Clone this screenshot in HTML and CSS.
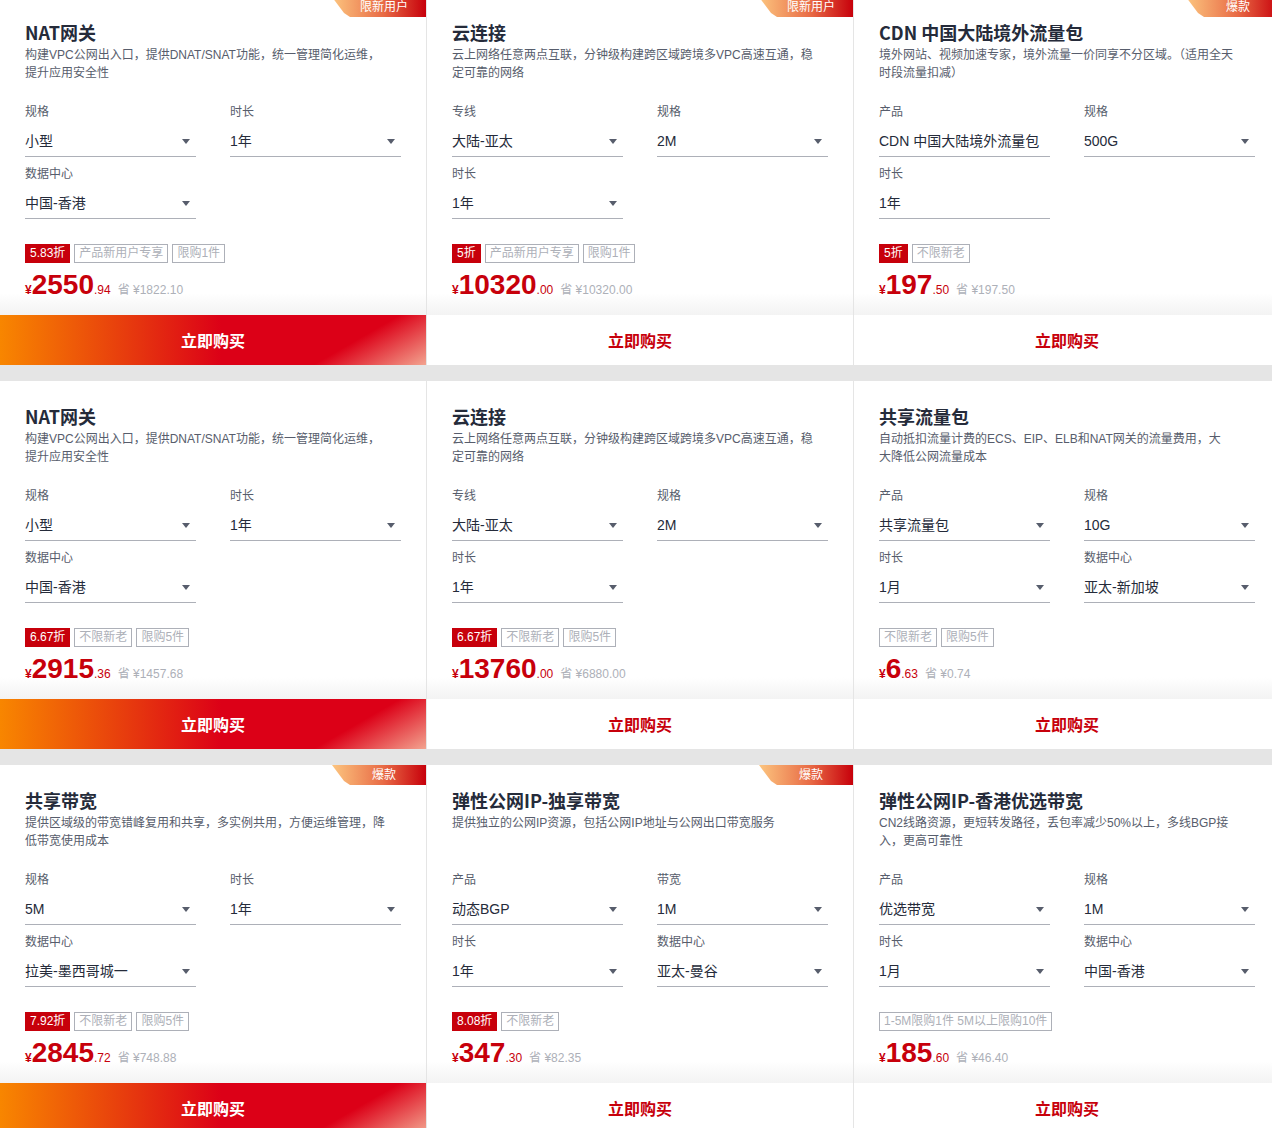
FILE: index.html
```html
<!DOCTYPE html>
<html lang="zh-CN">
<head>
    <meta charset="UTF-8">
    <meta name="viewport" content="width=device-width, initial-scale=1.0">
    <link rel="stylesheet" href="styles.css">
    <title>云产品特惠</title>
</head>
<body>
<div class="product_grid">

    <!-- row 1 -->
    <div class="card">
        <span class="corner">限新用户</span>
        <div class="card_body">
            <h3 class="title">NAT网关</h3>
            <p class="desc">构建VPC公网出入口，提供DNAT/SNAT功能，统一管理简化运维，提升应用安全性</p>
            <div class="fields">
                <div class="field"><div class="label">规格</div><div class="select">小型<i class="arrow"></i></div></div>
                <div class="field"><div class="label">时长</div><div class="select">1年<i class="arrow"></i></div></div>
                <div class="field"><div class="label">数据中心</div><div class="select">中国-香港<i class="arrow"></i></div></div>
            </div>
            <div class="tags">
                <span class="tag off">5.83折</span><span class="tag">产品新用户专享</span><span class="tag">限购1件</span>
            </div>
            <div class="price"><span class="cur">¥</span><span class="int">2550</span><span class="dec">.94</span><span class="save">省 ¥1822.10</span></div>
        </div>
        <a class="buy active">立即购买</a>
    </div>

    <div class="card">
        <span class="corner">限新用户</span>
        <div class="card_body">
            <h3 class="title">云连接</h3>
            <p class="desc">云上网络任意两点互联，分钟级构建跨区域跨境多VPC高速互通，稳定可靠的网络</p>
            <div class="fields">
                <div class="field"><div class="label">专线</div><div class="select">大陆-亚太<i class="arrow"></i></div></div>
                <div class="field"><div class="label">规格</div><div class="select">2M<i class="arrow"></i></div></div>
                <div class="field"><div class="label">时长</div><div class="select">1年<i class="arrow"></i></div></div>
            </div>
            <div class="tags">
                <span class="tag off">5折</span><span class="tag">产品新用户专享</span><span class="tag">限购1件</span>
            </div>
            <div class="price"><span class="cur">¥</span><span class="int">10320</span><span class="dec">.00</span><span class="save">省 ¥10320.00</span></div>
        </div>
        <a class="buy">立即购买</a>
    </div>

    <div class="card">
        <span class="corner">爆款</span>
        <div class="card_body">
            <h3 class="title">CDN 中国大陆境外流量包</h3>
            <p class="desc">境外网站、视频加速专家，境外流量一价同享不分区域。（适用全天时段流量扣减）</p>
            <div class="fields">
                <div class="field"><div class="label">产品</div><div class="select">CDN 中国大陆境外流量包</div></div>
                <div class="field"><div class="label">规格</div><div class="select">500G<i class="arrow"></i></div></div>
                <div class="field"><div class="label">时长</div><div class="select">1年</div></div>
            </div>
            <div class="tags">
                <span class="tag off">5折</span><span class="tag">不限新老</span>
            </div>
            <div class="price"><span class="cur">¥</span><span class="int">197</span><span class="dec">.50</span><span class="save">省 ¥197.50</span></div>
        </div>
        <a class="buy">立即购买</a>
    </div>

    <!-- row 2 -->
    <div class="card">
        <div class="card_body">
            <h3 class="title">NAT网关</h3>
            <p class="desc">构建VPC公网出入口，提供DNAT/SNAT功能，统一管理简化运维，提升应用安全性</p>
            <div class="fields">
                <div class="field"><div class="label">规格</div><div class="select">小型<i class="arrow"></i></div></div>
                <div class="field"><div class="label">时长</div><div class="select">1年<i class="arrow"></i></div></div>
                <div class="field"><div class="label">数据中心</div><div class="select">中国-香港<i class="arrow"></i></div></div>
            </div>
            <div class="tags">
                <span class="tag off">6.67折</span><span class="tag">不限新老</span><span class="tag">限购5件</span>
            </div>
            <div class="price"><span class="cur">¥</span><span class="int">2915</span><span class="dec">.36</span><span class="save">省 ¥1457.68</span></div>
        </div>
        <a class="buy active">立即购买</a>
    </div>

    <div class="card">
        <div class="card_body">
            <h3 class="title">云连接</h3>
            <p class="desc">云上网络任意两点互联，分钟级构建跨区域跨境多VPC高速互通，稳定可靠的网络</p>
            <div class="fields">
                <div class="field"><div class="label">专线</div><div class="select">大陆-亚太<i class="arrow"></i></div></div>
                <div class="field"><div class="label">规格</div><div class="select">2M<i class="arrow"></i></div></div>
                <div class="field"><div class="label">时长</div><div class="select">1年<i class="arrow"></i></div></div>
            </div>
            <div class="tags">
                <span class="tag off">6.67折</span><span class="tag">不限新老</span><span class="tag">限购5件</span>
            </div>
            <div class="price"><span class="cur">¥</span><span class="int">13760</span><span class="dec">.00</span><span class="save">省 ¥6880.00</span></div>
        </div>
        <a class="buy">立即购买</a>
    </div>

    <div class="card">
        <div class="card_body">
            <h3 class="title">共享流量包</h3>
            <p class="desc">自动抵扣流量计费的ECS、EIP、ELB和NAT网关的流量费用，大<br>大降低公网流量成本</p>
            <div class="fields">
                <div class="field"><div class="label">产品</div><div class="select">共享流量包<i class="arrow"></i></div></div>
                <div class="field"><div class="label">规格</div><div class="select">10G<i class="arrow"></i></div></div>
                <div class="field"><div class="label">时长</div><div class="select">1月<i class="arrow"></i></div></div>
                <div class="field"><div class="label">数据中心</div><div class="select">亚太-新加坡<i class="arrow"></i></div></div>
            </div>
            <div class="tags">
                <span class="tag">不限新老</span><span class="tag">限购5件</span>
            </div>
            <div class="price"><span class="cur">¥</span><span class="int">6</span><span class="dec">.63</span><span class="save">省 ¥0.74</span></div>
        </div>
        <a class="buy">立即购买</a>
    </div>

    <!-- row 3 -->
    <div class="card">
        <span class="corner">爆款</span>
        <div class="card_body">
            <h3 class="title">共享带宽</h3>
            <p class="desc">提供区域级的带宽错峰复用和共享，多实例共用，方便运维管理，降低带宽使用成本</p>
            <div class="fields">
                <div class="field"><div class="label">规格</div><div class="select">5M<i class="arrow"></i></div></div>
                <div class="field"><div class="label">时长</div><div class="select">1年<i class="arrow"></i></div></div>
                <div class="field"><div class="label">数据中心</div><div class="select">拉美-墨西哥城一<i class="arrow"></i></div></div>
            </div>
            <div class="tags">
                <span class="tag off">7.92折</span><span class="tag">不限新老</span><span class="tag">限购5件</span>
            </div>
            <div class="price"><span class="cur">¥</span><span class="int">2845</span><span class="dec">.72</span><span class="save">省 ¥748.88</span></div>
        </div>
        <a class="buy active">立即购买</a>
    </div>

    <div class="card">
        <span class="corner">爆款</span>
        <div class="card_body">
            <h3 class="title">弹性公网IP-独享带宽</h3>
            <p class="desc">提供独立的公网IP资源，包括公网IP地址与公网出口带宽服务</p>
            <div class="fields">
                <div class="field"><div class="label">产品</div><div class="select">动态BGP<i class="arrow"></i></div></div>
                <div class="field"><div class="label">带宽</div><div class="select">1M<i class="arrow"></i></div></div>
                <div class="field"><div class="label">时长</div><div class="select">1年<i class="arrow"></i></div></div>
                <div class="field"><div class="label">数据中心</div><div class="select">亚太-曼谷<i class="arrow"></i></div></div>
            </div>
            <div class="tags">
                <span class="tag off">8.08折</span><span class="tag">不限新老</span>
            </div>
            <div class="price"><span class="cur">¥</span><span class="int">347</span><span class="dec">.30</span><span class="save">省 ¥82.35</span></div>
        </div>
        <a class="buy">立即购买</a>
    </div>

    <div class="card">
        <div class="card_body">
            <h3 class="title">弹性公网IP-香港优选带宽</h3>
            <p class="desc">CN2线路资源，更短转发路径，丢包率减少50%以上，多线BGP接入，更高可靠性</p>
            <div class="fields">
                <div class="field"><div class="label">产品</div><div class="select">优选带宽<i class="arrow"></i></div></div>
                <div class="field"><div class="label">规格</div><div class="select">1M<i class="arrow"></i></div></div>
                <div class="field"><div class="label">时长</div><div class="select">1月<i class="arrow"></i></div></div>
                <div class="field"><div class="label">数据中心</div><div class="select">中国-香港<i class="arrow"></i></div></div>
            </div>
            <div class="tags">
                <span class="tag">1-5M限购1件 5M以上限购10件</span>
            </div>
            <div class="price"><span class="cur">¥</span><span class="int">185</span><span class="dec">.60</span><span class="save">省 ¥46.40</span></div>
        </div>
        <a class="buy">立即购买</a>
    </div>

</div>
</body>
</html>
```

FILE: styles.css
```css
*{
    margin:0;
    padding:0;
    box-sizing: border-box;
}

html, body{
    overflow: hidden;
}

body{
    background: #e5e5e5;
    font-family: "Liberation Sans", "Noto Sans CJK SC", sans-serif;
    color: #252b3a;
}

.product_grid
{
    width: 1280px;
    margin-top: -3px;
    display: grid;
    grid-template-columns: 426px 426px 426px;
    column-gap: 1px;
    row-gap: 16px;
    background: #e5e5e5;
}

.card
{
    position: relative;
    height: 368px;
    background: #fff;
    display: flex;
    flex-direction: column;
}

/* corner ribbon */
.corner
{
    position: absolute;
    top: 0;
    right: 0;
    width: 94px;
    height: 20px;
    padding-left: 10px;
    line-height: 20px;
    font-size: 12px;
    color: #fff;
    text-align: center;
    background: linear-gradient(to right, #fcc57f, #e86a45 55%, #c7000b);
    clip-path: polygon(0 0, 100% 0, 100% 100%, 18px 100%, 12px 80%);
    border-bottom-left-radius: 10px;
}

.card_body
{
    height: 318px;
    padding: 22px 24px 0 25px;
    background: linear-gradient(to bottom, #fff calc(100% - 22px), #f3f3f3);
}

.title
{
    font-size: 18px;
    line-height: 26px;
    font-weight: bold;
    font-family: "Noto Sans CJK SC", sans-serif;
    color: #252b3a;
}

.desc
{
    margin-top: 1px;
    width: 362px;
    height: 36px;
    font-size: 12px;
    line-height: 18px;
    color: #575d6c;
}

.fields
{
    margin-top: 21px;
    display: grid;
    grid-template-columns: 171px 171px;
    column-gap: 34px;
    row-gap: 8px;
}

.label
{
    font-size: 12px;
    line-height: 18px;
    color: #575d6c;
}

.select
{
    position: relative;
    margin-top: 3px;
    height: 33px;
    padding-top: 2px;
    line-height: 30px;
    font-size: 14px;
    color: #252b3a;
    border-bottom: 1px solid #adb0b8;
    white-space: nowrap;
}

.arrow
{
    position: absolute;
    right: 6px;
    top: 15px;
    width: 0;
    height: 0;
    border-left: 4px solid transparent;
    border-right: 4px solid transparent;
    border-top: 5px solid #575d6c;
}

.tags
{
    margin-top: 25px;
    display: flex;
    gap: 4px;
    height: 19px;
}

.tag
{
    height: 19px;
    padding: 0 4px;
    line-height: 17px;
    font-size: 12px;
    color: #adb0b8;
    border: 1px solid #adb0b8;
}

.tag.off
{
    color: #fff;
    background: #c7000b;
    border-color: #c7000b;
}

.price
{
    margin-top: 6px;
    height: 32px;
    line-height: 32px;
    color: #c7000b;
    white-space: nowrap;
}

.cur
{
    font-size: 12px;
    font-weight: bold;
}

.int
{
    font-size: 28px;
    font-weight: bold;
}

.dec
{
    font-size: 12px;
}

.save
{
    margin-left: 7px;
    font-size: 12px;
    color: #adb0b8;
}

.buy
{
    display: block;
    height: 50px;
    line-height: 50px;
    text-align: center;
    font-size: 16px;
    font-weight: bold;
    font-family: "Noto Sans CJK SC", sans-serif;
    color: #c7000b;
    background: #fff;
    cursor: pointer;
}

.buy.active
{
    color: #fff;
    background:
        linear-gradient(150deg, rgba(240, 160, 140, 0) 78%, rgba(244, 172, 150, .95) 100%),
        linear-gradient(to right, #f88600 0%, #e5330f 33%, #dc0017 52%, #dc0017 100%);
}
```
